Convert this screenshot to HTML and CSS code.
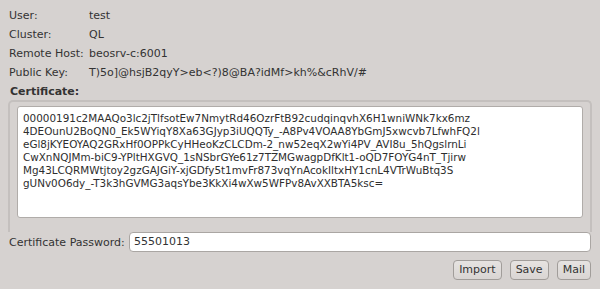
FILE: index.html
```html
<!DOCTYPE html>
<html>
<head>
<meta charset="utf-8">
<link rel="stylesheet" href="styles.css">
</head>
<body>
<div class="dlg">
  <div class="info">
    <div class="lbl">User:</div><div class="val">test</div>
    <div class="lbl">Cluster:</div><div class="val">QL</div>
    <div class="lbl">Remote Host:</div><div class="val">beosrv-c:6001</div>
    <div class="lbl">Public Key:</div><div class="val">T)5o]@hsjB2qyY&gt;eb&lt;?)8@BA?idMf&gt;kh%&amp;cRhV/#</div>
  </div>
  <div class="grp-title">Certificate:</div>
  <div class="grp">
    <div class="cert">00000191c2MAAQo3lc2jTlfsotEw7NmytRd46OzrFtB92cudqinqvhX6H1wniWNk7kx6mz<br>4DEOunU2BoQN0_Ek5WYiqY8Xa63GJyp3iUQQTy_-A8Pv4VOAA8YbGmJ5xwcvb7LfwhFQ2l<br>eGl8jKYEOYAQ2GRxHf0OPPkCyHHeoKzCLCDm-2_nw52eqX2wYi4PV_AVI8u_5hQgslrnLi<br>CwXnNQJMm-biC9-YPltHXGVQ_1sNSbrGYe61z7TZMGwagpDfKlt1-oQD7FOYG4nT_Tjirw<br>Mg43LCQRMWtjtoy2gzGAJGiY-xjGDfy5t1mvFr873vqYnAcokIltxHY1cnL4VTrWuBtq3S<br>gUNv0O6dy_-T3k3hGVMG3aqsYbe3KkXi4wXw5WFPv8AvXXBTA5ksc=</div>
  </div>
  <div class="pw-row">
    <div class="pw-lbl">Certificate Password:</div>
    <div class="pw-input">55501013</div>
  </div>
  <div class="btns">
    <div class="btn">Import</div>
    <div class="btn">Save</div>
    <div class="btn">Mail</div>
  </div>
</div>
</body>
</html>
```
FILE: styles.css
```css
html, body {
  margin: 0;
  padding: 0;
  background: #d6d2d0;
}
body {
  width: 600px;
  height: 289px;
  overflow: hidden;
  font-family: "DejaVu Sans", sans-serif;
  font-size: 11px;
  color: #333;
}
.dlg {
  display: flex;
  flex-direction: column;
  padding: 6px 9px 0 9px;
}
.info {
  display: grid;
  grid-template-columns: 80px 1fr;
  grid-auto-rows: 19px;
  align-items: center;
}
.grp-title {
  height: 19px;
  line-height: 19px;
  font-weight: bold;
  padding-left: 1px;
}
.grp {
  margin: -1px -1px 0 -1px;
  border: 2px solid #c4c0be;
  border-bottom: none;
  border-radius: 5px 5px 0 0;
  padding: 4px 7px 14px 7px;
}
.cert {
  background: #fff;
  border: 1px solid #b0aca9;
  border-radius: 3px;
  height: 97px;
  padding: 5px 5px 8px 5px;
  font-size: 10.4px;
  line-height: 13px;
  color: #2e2e2e;
  white-space: nowrap;
  overflow: hidden;
}
.pw-row {
  display: flex;
  align-items: center;
  height: 20px;
}
.pw-lbl {
  width: 120px;
}
.pw-input {
  flex: 1;
  height: 18px;
  line-height: 18px;
  background: #fff;
  border: 1px solid #aaa6a3;
  border-radius: 4px;
  padding-left: 4px;
}
.btns {
  display: flex;
  justify-content: flex-end;
  gap: 8px;
  margin-top: 8px;
}
.btn {
  height: 18px;
  line-height: 18px;
  padding: 0 5px;
  border: 1px solid #a19d9a;
  border-radius: 4px;
  background: linear-gradient(#e6e3e1, #d9d5d3);
}
```
